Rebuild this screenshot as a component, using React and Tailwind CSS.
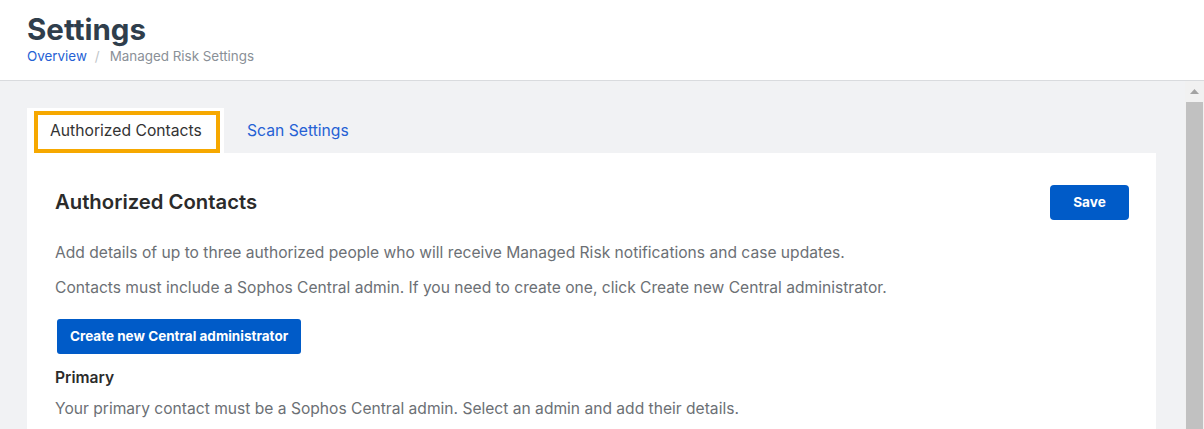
import React from "react";

const font = { fontFamily: "Inter, 'Noto Sans', sans-serif" };

const Header = () => (
  <div className="h-[81px] bg-white border-b border-[#d9dbde] px-[27px] pt-[12px]">
    <h1 className="text-[29.5px] leading-[34px] font-bold text-[#2f3e4c]">Settings</h1>
    <div className="flex items-center text-[13.4px] leading-[18px] mt-[1px]">
      <span className="text-[#2561d4]">Overview</span>
      <span className="text-[#c0c4c8] ml-[8px] mr-[10px]">/</span>
      <span className="text-[#8a9097]">Managed Risk Settings</span>
    </div>
  </div>
);

const Tabs = () => (
  <div className="flex items-end h-[45px]">
    <div className="bg-white h-[45px] w-[197px] pl-[7px] pt-[3px] pr-[4px]">
      <div className="border-[4px] border-[#f6a800] h-[42px] flex items-center pl-[12px] pb-[3px] text-[15.7px] text-[#333]">
        Authorized Contacts
      </div>
    </div>
    <div className="h-[45px] flex items-center pl-[23px] pt-[1px] text-[15.7px] text-[#2561d4]">
      Scan Settings
    </div>
  </div>
);

const Panel = () => (
  <div className="bg-white flex-1 pl-[28px] pr-[27px] pt-[31px]">
    <div className="flex items-center justify-between">
      <h2 className="text-[20.3px] leading-[36px] font-semibold text-[#2b2b2b]">Authorized Contacts</h2>
      <button className="h-[35px] w-[79px] rounded-[4px] bg-[#005bc8] text-white text-[13.6px] font-bold">
        Save
      </button>
    </div>
    <p className="mt-[21px] text-[15.6px] leading-[24px] text-[#6c7075]">
      Add details of up to three authorized people who will receive Managed Risk notifications and case updates.
    </p>
    <p className="mt-[11px] text-[15.6px] leading-[24px] text-[#6c7075]">
      Contacts must include a Sophos Central admin. If you need to create one, click Create new Central administrator.
    </p>
    <button className="mt-[19px] ml-[2px] h-[35px] px-[13px] rounded-[3px] bg-[#005bc8] text-white text-[13.5px] font-bold">
      Create new Central administrator
    </button>
    <h3 className="mt-[12px] text-[15.6px] leading-[24px] font-semibold text-[#2b2b2b]">Primary</h3>
    <p className="mt-[7px] text-[15.6px] leading-[24px] text-[#6c7075]">
      Your primary contact must be a Sophos Central admin. Select an admin and add their details.
    </p>
  </div>
);

const Scrollbar = () => (
  <div className="w-[19px] bg-[#f1f1f1] flex flex-col items-center">
    <div className="h-[21px] flex items-center justify-center">
      <svg width="9" height="6" viewBox="0 0 9 6">
        <path d="M0 5 L4.5 0 L9 5 Z" fill="#a3a3a3" />
      </svg>
    </div>
    <div className="w-[17px] flex-1 bg-[#c1c1c1]" />
  </div>
);

export default function App() {
  return (
    <div className="w-[1204px] h-[429px] overflow-hidden flex flex-col bg-[#f1f2f4]" style={font}>
      <Header />
      <div className="flex flex-1 min-h-0">
        <div className="flex-1 flex flex-col pl-[27px] pr-[29px] pt-[27px]">
          <Tabs />
          <Panel />
        </div>
        <Scrollbar />
      </div>
    </div>
  );
}
